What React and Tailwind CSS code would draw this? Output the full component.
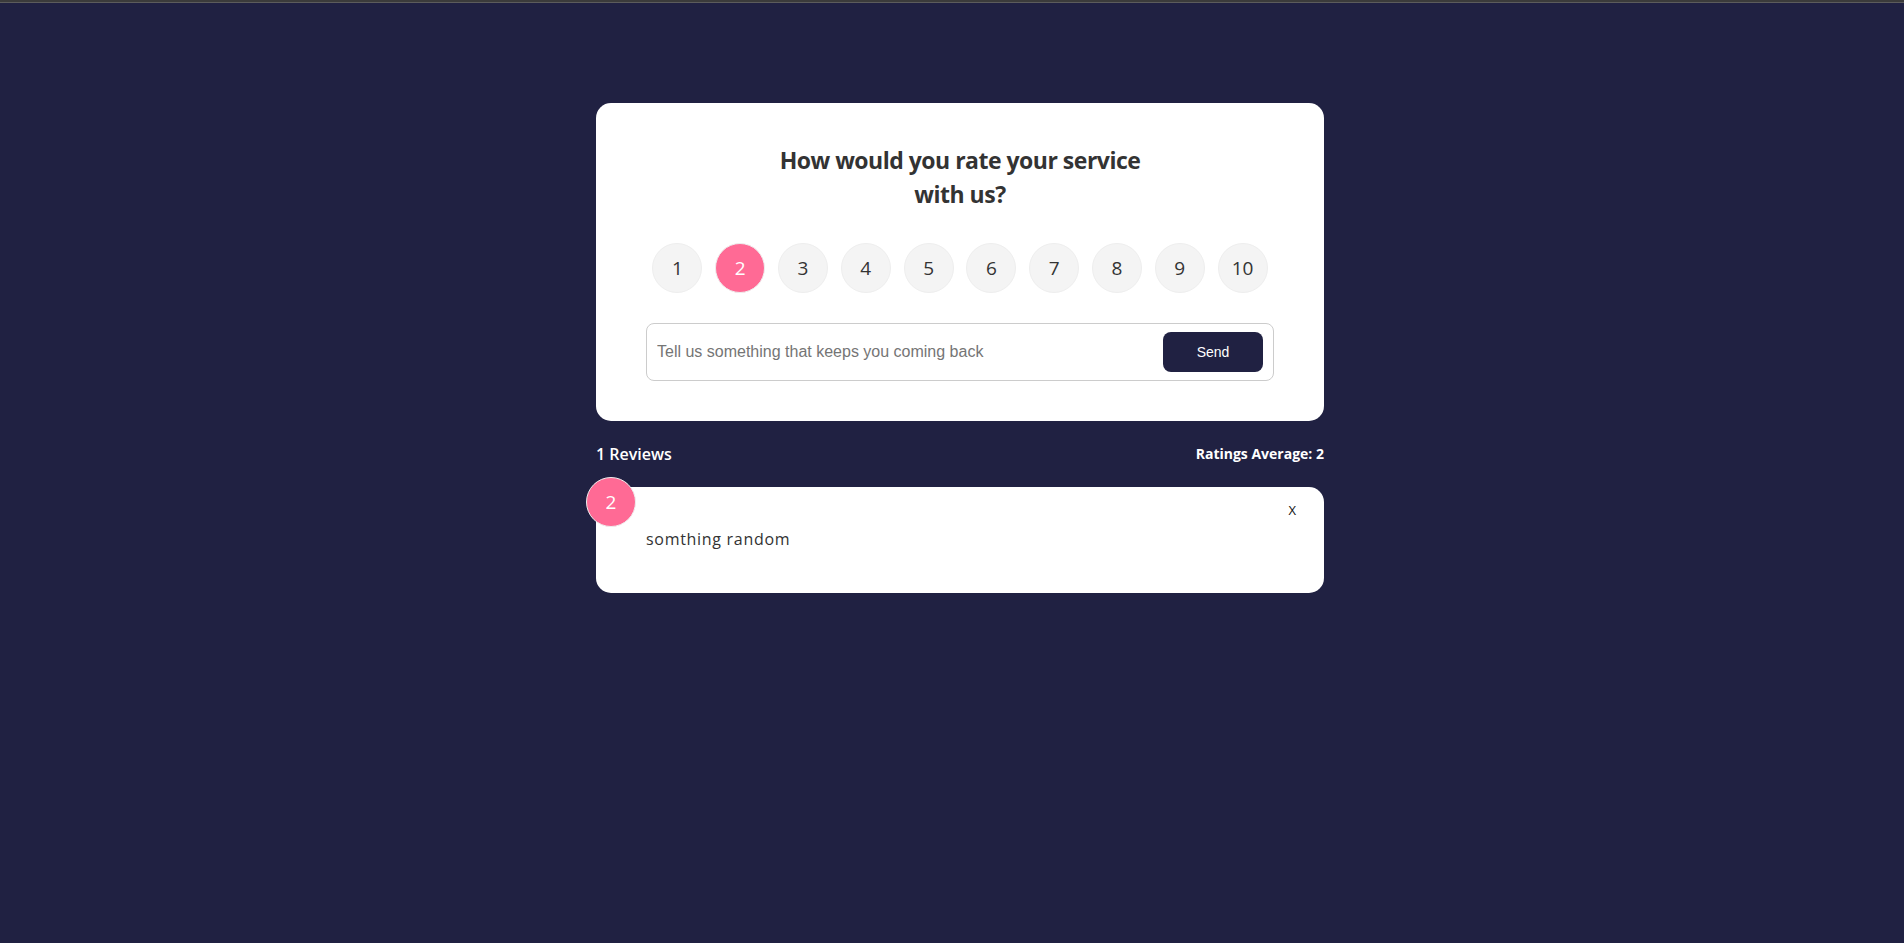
import { useState } from 'react'

const font = { fontFamily: '"Open Sans", "Noto Sans", sans-serif' }

function RatingSelect({ selected, onSelect }) {
  return (
    <ul className="mt-[32px] flex justify-around">
      {Array.from({ length: 10 }, (_, i) => i + 1).map(n => (
        <li key={n}>
          <button
            onClick={() => onSelect(n)}
            className={`flex h-[50px] w-[50px] items-center justify-center rounded-full border border-[#eee] text-[19px] ${
              n === selected ? 'bg-[#ff6a95] text-white' : 'bg-[#f4f4f4] text-[#333]'
            }`}
          >
            {n}
          </button>
        </li>
      ))}
    </ul>
  )
}

export default function App() {
  const [rating, setRating] = useState(2)
  const [text, setText] = useState('')
  const reviews = [{ id: 1, rating: 2, text: 'somthing random' }]
  const avg = reviews.reduce((a, r) => a + r.rating, 0) / reviews.length

  return (
    <div className="min-h-screen bg-[#202142]" style={font}>
      {/* browser chrome edge */}
      <div className="h-[2px] bg-[#3b3b3b]" />
      <div className="h-px bg-[#5c5c5c]" />

      <div className="pl-4">
        <div className="mx-auto w-[728px] pt-[100px]">
          {/* rating card */}
          <div className="rounded-[15px] bg-white px-[50px] pt-[40px] pb-[40px]">
            <h2 className="mx-auto w-[380px] text-center text-[23px] font-bold leading-[34px] tracking-[-0.5px] text-[#333]">
              How would you rate your service with us?
            </h2>
            <RatingSelect selected={rating} onSelect={setRating} />
            <div className="mt-[30px] flex items-center rounded-lg border border-[#ccc] px-[10px] py-[8px]">
              <input
                value={text}
                onChange={e => setText(e.target.value)}
                placeholder="Tell us something that keeps you coming back"
                className="flex-1 text-[16px] text-[#333] outline-none placeholder:text-[#757575]"
                style={{ fontFamily: '"Liberation Sans", Arial, sans-serif' }}
              />
              <button
                className="h-[40px] w-[100px] rounded-lg bg-[#202142] text-[14px] text-white"
                style={{ fontFamily: '"Liberation Sans", Arial, sans-serif' }}
              >
                Send
              </button>
            </div>
          </div>

          {/* stats */}
          <div className="mt-[21px] flex items-center justify-between text-white">
            <h4 className="text-[16px] font-semibold leading-[24px]">{reviews.length} Reviews</h4>
            <h4 className="text-[14px] font-bold leading-[24px]">Ratings Average: {avg}</h4>
          </div>

          {/* review list */}
          {reviews.map(r => (
            <div key={r.id} className="relative mt-[21px] rounded-[15px] bg-white px-[50px] pt-[40px] pb-[42px]">
              <div className="absolute -top-[10px] -left-[10px] flex h-[50px] w-[50px] items-center justify-center rounded-full border border-[#eee] bg-[#ff6a95] text-[19px] text-white">
                {r.rating}
              </div>
              <button className="absolute top-[14px] right-[28px] text-[13px] text-[#111]">X</button>
              <div className="text-[16px] leading-[24px] tracking-[0.7px] text-[#333]">{r.text}</div>
            </div>
          ))}
        </div>
      </div>
    </div>
  )
}
